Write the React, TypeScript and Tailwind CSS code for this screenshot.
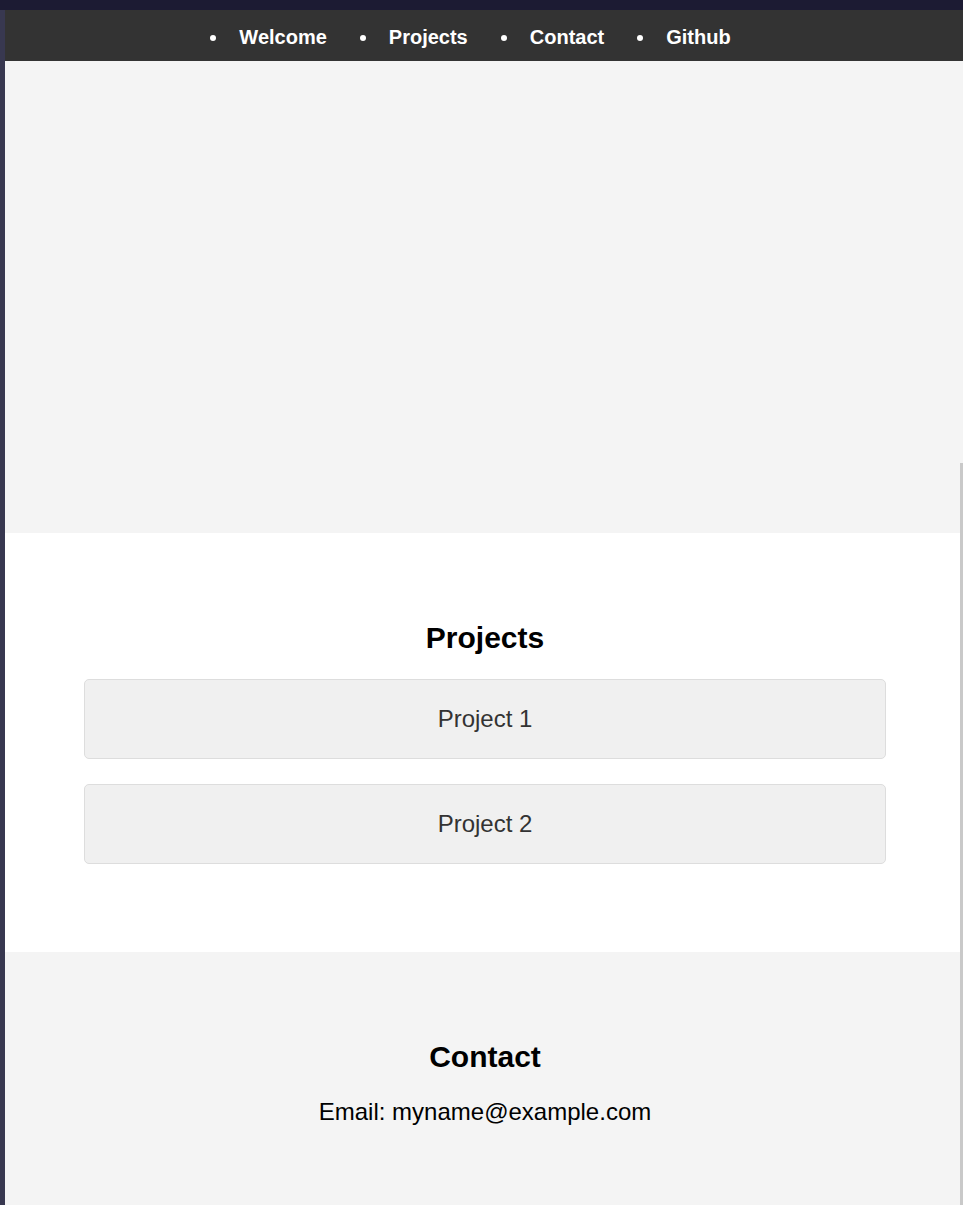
const navLinks = ['Welcome', 'Projects', 'Contact', 'Github'];
const projects = ['Project 1', 'Project 2'];

function Nav() {
  return (
    <nav className="h-[51px] bg-[#333333] flex items-center justify-center pr-[27px] pt-[2px]">
      <ul className="flex items-center gap-[33px]">
        {navLinks.map((link) => (
          <li key={link} className="flex items-center gap-[23px]">
            <span className="w-[6px] h-[6px] rounded-full bg-white mt-[2px]" />
            <a href="#" className="text-white font-bold text-[20px] leading-[24px]">
              {link}
            </a>
          </li>
        ))}
      </ul>
    </nav>
  );
}

export default function App() {
  return (
    <div
      className="relative min-h-screen flex flex-col bg-[#1c1b33]"
      style={{ fontFamily: '"Liberation Sans", Arial, sans-serif' }}
    >
      {/* editor chrome: top strip + left gutter */}
      <div className="h-[10px] bg-[#1c1b33]" />
      <div className="flex-1 flex">
        <div className="w-[5px] bg-[#383850]" />
        <main className="flex-1 flex flex-col">
          <Nav />

          {/* Welcome / hero */}
          <section className="h-[472px] bg-[#f4f4f4]" />

          {/* Projects */}
          <section className="bg-white pt-[88px] pb-[88px] pl-[2px]">
            <h2 className="text-center font-bold text-[30px] leading-[33px] text-black">Projects</h2>
            <div className="mt-[25px] flex flex-col gap-[25px]">
              {projects.map((p) => (
                <div
                  key={p}
                  className="w-[802px] h-[80px] mx-auto flex items-center justify-center bg-[#f0f0f0] border border-[#dddddd] rounded-[5px] text-[24px] text-[#333333]"
                >
                  {p}
                </div>
              ))}
            </div>
          </section>

          {/* Contact */}
          <section className="flex-1 bg-[#f4f4f4] pt-[88px] pl-[2px]">
            <h2 className="text-center font-bold text-[30px] leading-[33px] text-black">Contact</h2>
            <p className="mt-[25px] text-center text-[24px] leading-[28px] text-black">
              Email: myname@example.com
            </p>
          </section>
        </main>
      </div>

      {/* scrollbar edge on the right */}
      <div className="absolute right-0 top-[463px] bottom-0 w-[3px] bg-[#c9c9c9]" />
    </div>
  );
}
